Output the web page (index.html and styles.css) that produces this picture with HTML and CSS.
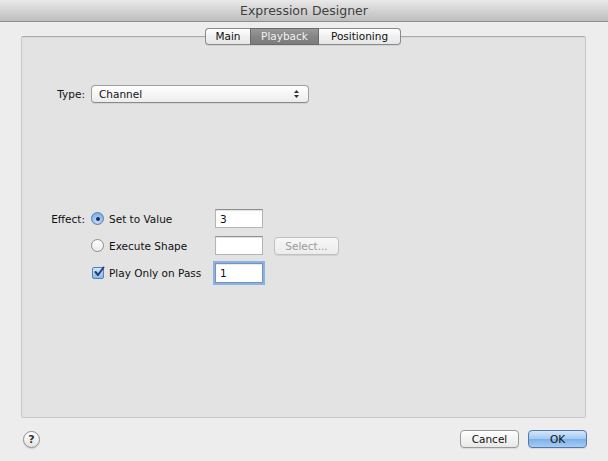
FILE: index.html
```html
<!DOCTYPE html>
<html>
<head>
<meta charset="utf-8">
<link rel="stylesheet" href="styles.css">
</head>
<body>
<div class="window">
  <div class="titlebar">Expression Designer</div>
  <div class="tabs">
    <div class="tab tab-main">Main</div>
    <div class="tab tab-play selected">Playback</div>
    <div class="tab tab-pos">Positioning</div>
  </div>
  <div class="tabbox">
    <div class="row type-row">
      <div class="label">Type:</div>
      <div class="popup"><span>Channel</span>
        <svg class="arrows" width="7" height="10" viewBox="0 0 7 10"><path d="M1 4 L3.5 1 L6 4 Z M1 6 L3.5 9 L6 6 Z" fill="#333"/></svg>
      </div>
    </div>
    <div class="effect">
      <div class="label">Effect:</div>
      <div class="opt"><span class="radio on"><span class="dot"></span></span><span>Set to Value</span></div>
      <div class="field">3</div>
      <div></div>

      <div></div>
      <div class="opt"><span class="radio"></span><span>Execute Shape</span></div>
      <div class="field"></div>
      <div class="btn disabled">Select...</div>

      <div></div>
      <div class="opt"><span class="check"><svg width="12" height="12" viewBox="0 0 12 12"><path d="M2.5 6 L5 9 L10.5 1.5" fill="none" stroke="#1f3f7a" stroke-width="2" stroke-linecap="round" stroke-linejoin="round"/></svg></span><span>Play Only on Pass</span></div>
      <div class="field focus">1</div>
      <div></div>
    </div>
  </div>
  <div class="footer">
    <div class="help">?</div>
    <div class="buttons">
      <div class="btn push">Cancel</div>
      <div class="btn push default">OK</div>
    </div>
  </div>
</div>
</body>
</html>
```
FILE: styles.css
```css
html, body {
  margin: 0;
  padding: 0;
}
body {
  width: 608px;
  height: 461px;
  overflow: hidden;
  font-family: "DejaVu Sans", "Liberation Sans", sans-serif;
  font-size: 10.5px;
  color: #111;
  background: #ededed;
}
.window {
  width: 608px;
  height: 461px;
  background: #ededed;
  display: flex;
  flex-direction: column;
}
.titlebar {
  height: 21px;
  border-bottom: 1px solid #8e8e8e;
  background: linear-gradient(#e9e9e9, #cfcfcf 60%, #bdbdbd);
  text-align: center;
  line-height: 22px;
  font-size: 12.5px;
  color: #3f3f3f;
}
.tabs {
  display: flex;
  justify-content: center;
  margin-top: 6px;
  height: 17px;
  position: relative;
  z-index: 2;
  padding-right: 2px;
}
.tab {
  height: 15px;
  line-height: 15px;
  border: 1px solid #8a8a8a;
  background: linear-gradient(#ffffff, #f0f0f0 50%, #e6e6e6);
  text-align: center;
  font-size: 10.5px;
  color: #111;
  box-shadow: 0 1px 0 rgba(0,0,0,0.08);
}
.tab-main {
  width: 44px;
  border-radius: 4px 0 0 4px;
  border-right: none;
}
.tab-play {
  width: 67px;
  border-left: 1px solid #6e6e6e;
  border-right: 1px solid #6e6e6e;
}
.tab-pos {
  width: 81px;
  border-radius: 0 4px 4px 0;
  border-left: none;
}
.tab.selected {
  background: linear-gradient(#9a9a9a, #858585 50%, #7c7c7c);
  color: #f2f2f2;
  border-color: #6a6a6a;
}
.tabbox {
  margin: -9px 22px 0 21px;
  height: 382px;
  background: #e3e3e3;
  border: 1px solid #c8c8c8;
  border-top-color: #a9a9a9;
  border-radius: 2px;
  box-sizing: border-box;
  position: relative;
  z-index: 1;
  padding-top: 48px;
  box-shadow: inset 0 1px 1px rgba(0,0,0,0.05);
}
.row {
  display: flex;
  align-items: center;
}
.label {
  width: 66px;
  text-align: right;
  padding-right: 3px;
  box-sizing: border-box;
  color: #111;
}
.popup {
  width: 218px;
  height: 18px;
  box-sizing: border-box;
  border: 1px solid #9e9e9e;
  border-bottom-color: #8a8a8a;
  border-radius: 4px;
  background: linear-gradient(#ffffff, #f6f6f6 50%, #ececec);
  display: flex;
  align-items: center;
  justify-content: space-between;
  padding: 0 8px 0 7px;
  margin-left: 3px;
  box-shadow: 0 1px 0 rgba(0,0,0,0.07);
}
.arrows {
  display: block;
}
.effect {
  display: grid;
  grid-template-columns: 66px 127px 48px 76px;
  grid-template-rows: 19px 19px 20px;
  row-gap: 8px;
  margin-top: 106px;
  align-items: center;
}
.effect > :nth-child(10) {
  margin-top: -1px;
}
.opt {
  display: flex;
  align-items: center;
  gap: 5px;
  padding-left: 3px;
}
.radio {
  width: 13px;
  height: 13px;
  box-sizing: border-box;
  border-radius: 50%;
  border: 1px solid #8c8c8c;
  background: linear-gradient(#ffffff, #ebebeb);
  display: flex;
  align-items: center;
  justify-content: center;
}
.radio.on {
  border-color: #5a7fae;
  background: radial-gradient(circle at 50% 70%, #cde4fa, #8bb8e8 60%, #6d9fd6);
}
.dot {
  width: 4px;
  height: 4px;
  border-radius: 50%;
  background: #1c2f50;
}
.check {
  width: 12px;
  height: 12px;
  box-sizing: border-box;
  border: 1px solid #5a7fae;
  border-radius: 2px;
  background: linear-gradient(#d2e6fb, #8db9e9);
  position: relative;
  margin-left: 1px;
}
.check svg {
  position: absolute;
  left: 0;
  top: -2px;
}
.field {
  width: 48px;
  height: 19px;
  box-sizing: border-box;
  background: #fff;
  border: 1px solid #b4b4b4;
  border-top-color: #8f8f8f;
  box-shadow: inset 0 1px 1px rgba(0,0,0,0.12);
  padding-left: 4px;
  line-height: 18px;
  font-size: 10.5px;
}
.field.focus {
  height: 20px;
  border-color: #6f95c6;
  box-shadow: 0 0 0 2px #8db2e0, inset 0 1px 1px rgba(0,0,0,0.1);
  line-height: 19px;
}
.btn {
  height: 18px;
  box-sizing: border-box;
  border: 1px solid #9a9a9a;
  border-radius: 4px;
  background: linear-gradient(#ffffff, #f3f3f3 50%, #e8e8e8);
  text-align: center;
  line-height: 16px;
  font-size: 10.5px;
  box-shadow: 0 1px 0 rgba(0,0,0,0.08);
}
.btn.disabled {
  width: 65px;
  margin-left: 11px;
  color: #9a9a9a;
  border-color: #c0c0c0;
  background: linear-gradient(#f7f7f7, #ececec);
}
.footer {
  display: flex;
  justify-content: space-between;
  align-items: center;
  padding: 12px 21px 0 23px;
}
.help {
  width: 17px;
  height: 17px;
  box-sizing: border-box;
  border-radius: 50%;
  border: 1px solid #8f8f8f;
  background: linear-gradient(#ffffff, #e4e4e4);
  text-align: center;
  line-height: 15px;
  font-weight: bold;
  font-size: 11px;
  color: #333;
  box-shadow: 0 1px 1px rgba(0,0,0,0.15);
}
.buttons {
  display: flex;
  gap: 9px;
}
.btn.push {
  width: 59px;
}
.btn.default {
  border-color: #5677a6;
  background: linear-gradient(#d3e6fb, #a3c8f0 50%, #7cb0ea 51%, #a5ccf5);
}
```
